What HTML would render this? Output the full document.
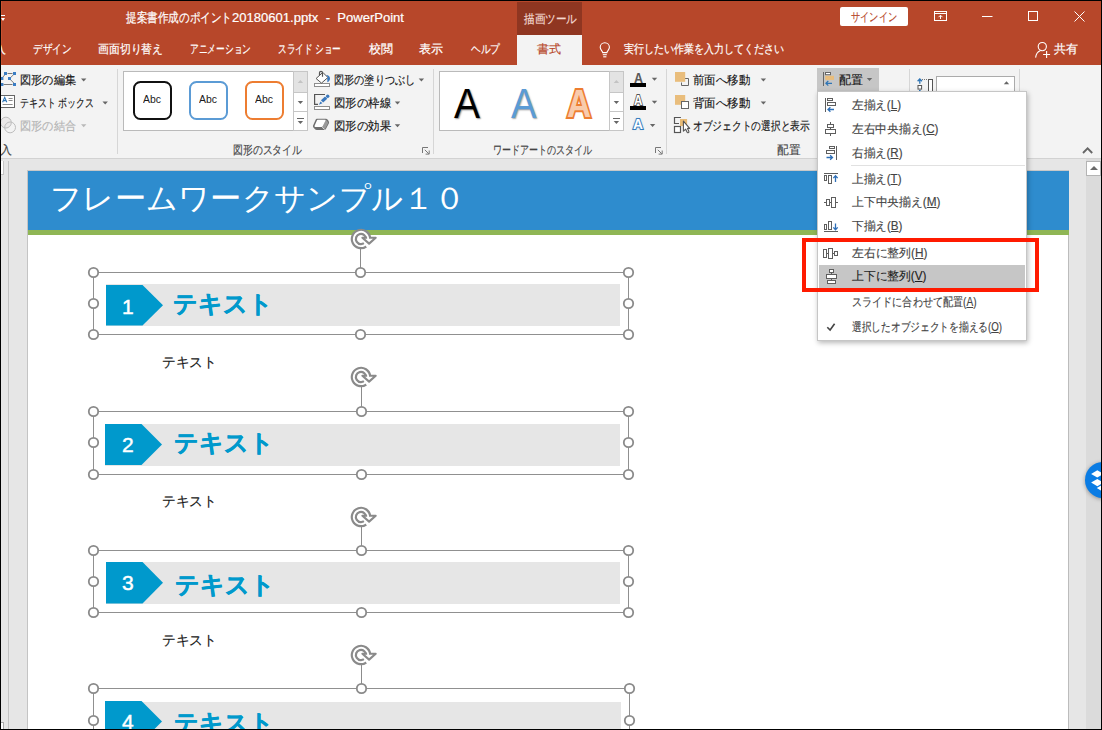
<!DOCTYPE html>
<html lang="ja"><head><meta charset="utf-8"><title>PowerPoint</title>
<style>
html,body{margin:0;padding:0;}
body{width:1102px;height:730px;overflow:hidden;background:#e6e6e6;font-family:"Liberation Sans",sans-serif;}
#app{position:relative;width:1102px;height:730px;overflow:hidden;background:#e6e6e6;}
#app div,#app span,#app svg{position:absolute;box-sizing:border-box;}
.t{white-space:nowrap;transform-origin:0 50%;display:block;}
.sep{width:1px;background:#d6d6d6;top:69px;height:85px;}
.sel{border:1px solid #909090;}
.stem{width:1px;background:#8c8c8c;}
.bar{background:#e6e6e6;}
u{text-decoration:underline;text-underline-offset:1px;}
.ui{-webkit-text-stroke-width:0.15px;}
.uw{-webkit-text-stroke-width:0.2px;}

</style></head>
<body>
<div id="app">
<!-- ===== title bar + tab row ===== -->
<div style="left:0;top:0;width:1102px;height:65px;background:#b7472a"></div>
<div style="left:1px;top:1px;width:1px;height:64px;background:#c8532f"></div>
<div style="left:517px;top:2px;width:65px;height:33px;background:#8f3621"></div>
<div style="left:517px;top:34.5px;width:65px;height:31px;background:#f3f3f3"></div>
<!-- QAT customize glyph -->
<div style="left:1px;top:15px;width:4px;height:1px;background:#fff"></div>
<div style="left:1px;top:18px;width:0;height:0;border-left:2px solid transparent;border-right:2.5px solid transparent;border-top:3px solid #fff"></div>
<!-- sign-in button -->
<div style="left:840px;top:7px;width:68px;height:19px;background:#fff;border-radius:2px"></div>
<!-- window controls -->
<svg style="left:930px;top:6px" width="160" height="22" viewBox="0 0 160 22" fill="none" stroke="#fff" stroke-width="1">
  <rect x="4.5" y="5.5" width="12" height="9"/><line x1="4.5" y1="7.5" x2="16.5" y2="7.5"/>
  <path d="M10.5 13V9.5M8.5 11.2l2-2 2 2"/>
  <line x1="52" y1="10.5" x2="62.5" y2="10.5"/>
  <rect x="98.5" y="5.5" width="9" height="9"/>
  <path d="M144.5 5.5l10 10M154.5 5.5l-10 10"/>
</svg>
<!-- lightbulb -->
<svg style="left:597px;top:41px" width="16" height="18" viewBox="0 0 16 18" fill="none" stroke="#fff" stroke-width="1.1">
  <path d="M5.7 11.6C5.5 9.9 3.2 8.8 3.2 6.3a4.6 4.6 0 0 1 9.2 0c0 2.5-2.3 3.6-2.5 5.3z"/>
  <line x1="5.8" y1="13.7" x2="9.8" y2="13.7"/><line x1="6.2" y1="15.8" x2="9.4" y2="15.8"/>
</svg>
<!-- share icon -->
<svg style="left:1033px;top:40px" width="20" height="20" viewBox="0 0 20 20" fill="none" stroke="#fff" stroke-width="1.1">
  <circle cx="9.3" cy="6.6" r="4.1"/><path d="M2.6 17.6c.4-3.6 2.4-6 4.6-6.9"/>
  <path d="M13.6 11v7M10.1 14.5h7"/>
</svg>

<!-- ===== ribbon ===== -->
<div style="left:0;top:65px;width:1102px;height:93px;background:#f3f3f3"></div>
<div style="left:0;top:158px;width:1102px;height:1px;background:#d2d2d2"></div>
<div class="sep" style="left:117px"></div>
<div class="sep" style="left:433px"></div>
<div class="sep" style="left:666px"></div>
<div class="sep" style="left:909px"></div>
<div class="sep" style="left:1019px"></div>
<!-- pressed "配置" button -->
<div style="left:817px;top:68px;width:62px;height:23.5px;background:#c6c6c6"></div>
<!-- shape style gallery -->
<div style="left:123px;top:71px;width:185px;height:60px;background:#fff;border:1px solid #bababa"></div>
<div style="left:293px;top:71px;width:15px;height:60px;border:1px solid #c6c6c6;background:#fff"></div>
<div style="left:294px;top:72px;width:13px;height:20px;background:#e3e3e3"></div>
<div style="left:294px;top:92px;width:13px;height:1px;background:#c6c6c6"></div>
<div style="left:294px;top:111px;width:13px;height:1px;background:#c6c6c6"></div>
<div style="left:132.5px;top:81px;width:39px;height:39px;border:2px solid #111;border-radius:7.5px"></div>
<div style="left:188.5px;top:81px;width:39px;height:39px;border:2px solid #5b9bd5;border-radius:7.5px"></div>
<div style="left:244.5px;top:81px;width:39px;height:39px;border:2px solid #ed7d31;border-radius:7.5px"></div>
<!-- wordart gallery -->
<div style="left:439px;top:71px;width:185px;height:60px;background:#fff;border:1px solid #bababa"></div>
<div style="left:609px;top:71px;width:15px;height:60px;border:1px solid #c6c6c6;background:#fff"></div>
<div style="left:610px;top:72px;width:13px;height:20px;background:#e3e3e3"></div>
<div style="left:610px;top:92px;width:13px;height:1px;background:#c6c6c6"></div>
<div style="left:610px;top:111px;width:13px;height:1px;background:#c6c6c6"></div>
<!-- size spinner -->
<div style="left:936px;top:76px;width:79px;height:20px;background:#fff;border:1px solid #ababab"></div>
<svg style="left:0;top:65px" width="1102" height="94" viewBox="0 65 1102 94" fill="none">
<!-- dropdown arrows -->
<g fill="#666">
<path d="M81 78.5h5.4l-2.7 3z"/><path d="M102.5 101.5h5.4l-2.7 3z"/>
<path d="M418.7 78.5h5.4l-2.7 3z"/><path d="M394.8 101.5h5.4l-2.7 3z"/><path d="M394.8 124.2h5.4l-2.7 3z"/>
<path d="M651.8 77.8h5.4l-2.7 3z"/><path d="M651.8 100.8h5.4l-2.7 3z"/><path d="M649.9 124h5.4l-2.7 3z"/>
<path d="M760.7 78.5h5.4l-2.7 3z"/><path d="M760.7 101.5h5.4l-2.7 3z"/>
<path d="M866.8 78h5.4l-2.7 3z"/>
<path d="M297.7 101h5.4l-2.7 3z"/><path d="M613.7 101h5.4l-2.7 3z"/>
<path d="M297.7 121h5.4l-2.7 3z"/><path d="M613.7 121h5.4l-2.7 3z"/>
<rect x="297" y="118" width="7" height="1"/><rect x="613" y="118" width="7" height="1"/>
<path d="M1003.8 84.3h5.4l-2.7-3z"/>
</g>
<path d="M81 124.2h5.4l-2.7 3z" fill="#b9b9b9"/>
<path d="M297.7 83h5.4l-2.7-3z" fill="#c3c3c3"/><path d="M613.7 83h5.4l-2.7-3z" fill="#c3c3c3"/>
<!-- dialog launchers -->
<g stroke="#777" stroke-width="1"><path d="M422.5 153V147.5H428"/><path d="M424.8 149.8l4 4M429.2 150.5v3.6h-3.6"/>
<path d="M655.5 153V147.5H661"/><path d="M657.8 149.8l4 4M662.2 150.5v3.6h-3.6"/></g>
<!-- collapse chevron -->
<path d="M1083 153l4.600-4.600 4.600 4.600" stroke="#666" stroke-width="1.900"/>
<!-- edit shape icon -->
<g stroke="#7a7a7a" stroke-width="1"><path d="M7.5 73.5h5M13.6 74.6l-3.4 3.4M10.4 79.6l3.4 3.4M3.5 84.5h9M4.8 74.8l-2.2 2.6" /></g>
<g fill="#3b7dc4"><rect x="4" y="72" width="3" height="3"/><rect x="13" y="72" width="3" height="3"/><rect x="8" y="77" width="3" height="3"/><rect x="1" y="77" width="2.4" height="3"/><rect x="1" y="83" width="2.4" height="3"/><rect x="13" y="83" width="3" height="3"/></g>
<!-- text box icon -->
<rect x="0.5" y="95.5" width="14" height="12" fill="#fff" stroke="#666"/>
<path d="M2.6 102.3l2.1-5 2.1 5M3.4 100.6h2.8" stroke="#2e75b6" stroke-width="1.1"/>
<path d="M8.6 98.5h4M8.6 100.5h4M2.6 104.5h10" stroke="#8a8a8a"/>
<!-- merge shapes (disabled) -->
<circle cx="5.9" cy="122.6" r="5.4" stroke="#bdbdbd" fill="#ebe9e9"/><circle cx="10.1" cy="127.4" r="5.4" stroke="#bdbdbd" fill="none"/>
<!-- shape fill -->
<rect x="314.500" y="83.500" width="15" height="3" fill="#fff" stroke="#8e8e8e"/>
<path d="M322.800 72.400l5.100 5.100-6.400 5.600-5.400-4.600z" fill="#fff" stroke="#555"/>
<path d="M319.500 75.300v-2.500c0-1 .5-1.500 1.500-1.500s1.500.5 1.500 1.500v3.900" stroke="#555" stroke-width="1.200"/>
<path d="M326.100 75c2.400.2 3.900 1.500 3.900 3.400 0 1.700-1 3-2.700 3.900.2-1.600.1-2.800-.2-3.900l1.100-1z" fill="#3a78bd"/>
<!-- shape outline -->
<rect x="314.500" y="106.500" width="15" height="3" fill="#fff" stroke="#8e8e8e"/>
<path d="M325 94.500h-10.400v9.900h3.400" stroke="#555" stroke-width="1.200"/>
<path d="M322 101.400l4.200-3.800" stroke="#3a78bd" stroke-width="3.300"/><circle cx="327.700" cy="96.300" r="1.700" fill="#3a78bd"/><path d="M318.900 104.700l1.600-3.300 1.900 1.900z" fill="#3a78bd"/>
<!-- shape effects -->
<path d="M317.400 118.700h7.900c1 0 2.100.400 2.700 1.300l.8 1.500c.4.700.4 1.400 0 2.100l-2.900 5.300c-.4.700-1 1.100-1.800 1.100h-7.300c-.8 0-1.500-.3-2-.9l-1.400-1.700c-.5-.6-.6-1.400-.2-2.100l2.300-5.400c.3-.8 1-1.200 1.900-1.200z" fill="#6f6f6f"/>
<path d="M326 119.800l2.300 3-3.400 6.400-2.700-2.300z" fill="#9a9a9a"/>
<path d="M317.700 119.700h7.100c.7 0 1 .5.700 1.100l-2.800 5.400c-.2.400-.6.700-1.100.7h-6.300c-.7 0-1-.5-.7-1.100l2.300-5.400c.2-.4.400-.700.800-.700z" fill="#fff"/>
<path d="M322.100 127.200l2.600 2.400" stroke="#f0f0f0" stroke-width=".8"/>
<!-- text fill / outline / effects -->
<rect x="630" y="83" width="16" height="4" fill="#000"/><rect x="630" y="106" width="16" height="4" fill="#000"/>
<!-- bring forward -->
<path d="M684 78.500h4.500v7h-7v-3" stroke="#666"/>
<rect x="675" y="72" width="10.200" height="9.800" fill="#e9bd7c"/>
<!-- send backward -->
<rect x="675" y="95" width="10.200" height="9.800" fill="#e9bd7c"/>
<rect x="681.500" y="101.500" width="7" height="7" fill="#fff" stroke="#666"/>
<!-- selection pane -->
<path d="M680.900 117.500h-6.400v6h4.500" stroke="#555" stroke-width="1.200"/><rect x="674.500" y="126.500" width="6" height="6" fill="#fff" stroke="#555" stroke-width="1.200"/>
<rect x="680" y="119" width="7.100" height="7" fill="#e8bb76"/>
<path d="M683.400 121.200v10l2.300-2 1.300 2.900c.3.600.9.800 1.400.5.500-.2.700-.800.400-1.400l-1.300-2.800h2.200z" fill="#fff" stroke="#555" stroke-width="1.100" stroke-linejoin="round"/>
<!-- align button icon -->
<path d="M823.500 72v14" stroke="#666"/><rect x="825.500" y="72.500" width="5" height="2.200" fill="#fff" stroke="#666"/>
<rect x="825.200" y="75.800" width="8.800" height="4.100" fill="#e9bd7c"/>
<path d="M832 83.300h-6M828.300 81l-2.400 2.300 2.400 2.300" stroke="#2e75b6" stroke-width="1.200"/>
<!-- size height icon -->
<path d="M919.800 83.800v-4.500M917.600 81.300l2.200-2.300 2.200 2.300" stroke="#2e75b6" stroke-width="1.300"/>
<rect x="918" y="85.500" width="3.600" height="3.600" fill="#fff" stroke="#555"/><rect x="919" y="90" width="1.600" height="1" fill="#2e75b6"/>
<path d="M922 79.500h5" stroke="#777" stroke-dasharray="1 1"/>
<rect x="928.500" y="79.500" width="4" height="13" fill="#fff" stroke="#555"/>
</svg>


<!-- ===== workspace ===== -->
<div style="left:0;top:159px;width:1102px;height:571px;background:#e6e6e6"></div>
<div style="left:8px;top:161px;width:1px;height:569px;background:#c2c2c2"></div>
<div style="left:1px;top:161px;width:3px;height:14px;background:#fff;border-right:1px solid #c6c6c6;border-bottom:1px solid #c6c6c6"></div>
<div style="left:1px;top:722px;width:3px;height:7px;background:#fff;border-right:1px solid #ababab;border-top:1px solid #ababab"></div>
<!-- scrollbar -->
<div style="left:1086px;top:159px;width:16px;height:571px;background:#dbdbdb"></div>
<div style="left:1086px;top:161px;width:15px;height:15px;background:#fff;border:1px solid #b4b4b4"></div>
<div style="left:1089.500px;top:165.800px;width:0;height:0;border-left:4px solid transparent;border-right:4px solid transparent;border-bottom:4.500px solid #6a6a6a"></div>
<!-- slide -->
<div style="left:27px;top:170px;width:1042px;height:560px;background:#fff;border-left:1px solid #c4c4c4;border-right:1px solid #bcbcbc;border-top:1px solid #c8c8c8"></div>
<div style="left:28px;top:171px;width:1041px;height:59.5px;background:#2e8cce"></div>
<div style="left:28px;top:230.3px;width:1041px;height:4.5px;background:#8fb655"></div>
<div class="bar" style="left:106px;top:284.2px;width:514px;height:41.8px"></div>
<svg style="left:105px;top:285.0px" width="60" height="41.5" viewBox="0 0 60 41.5"><path d="M1 0H37.5L58 20.25 37.5 40.5H1z" fill="#0099cc"/></svg>
<div class="sel" style="left:93px;top:272.0px;width:536px;height:63px"></div>
<div class="stem" style="left:360px;top:247.0px;height:25.5px"></div>
<svg style="left:349.1px;top:227.4px" width="30" height="24" viewBox="-12 -12 30 24" fill="none">
<path d="M7.08 -0.99A7.15 7.15 0 1 0 4.1 5.86" stroke="#8a8a8a" stroke-width="6.3"/>
<path d="M1.4 -1.3H14.7L8.1 4.6z" fill="#fff" stroke="#8a8a8a" stroke-width="2.1" stroke-linejoin="round"/>
<path d="M7.14 0.3A7.15 7.15 0 1 0 5.63 4.4" stroke="#fff" stroke-width="1.9"/>
</svg>
<svg style="left:87.0px;top:266.0px" width="13" height="13" viewBox="0 0 13 13"><circle cx="6.5" cy="6.5" r="4.7" fill="#fff" stroke="#8a8a8a" stroke-width="1.8"/></svg>
<svg style="left:87.0px;top:297.0px" width="13" height="13" viewBox="0 0 13 13"><circle cx="6.5" cy="6.5" r="4.7" fill="#fff" stroke="#8a8a8a" stroke-width="1.8"/></svg>
<svg style="left:87.0px;top:328.0px" width="13" height="13" viewBox="0 0 13 13"><circle cx="6.5" cy="6.5" r="4.7" fill="#fff" stroke="#8a8a8a" stroke-width="1.8"/></svg>
<svg style="left:354.0px;top:266.0px" width="13" height="13" viewBox="0 0 13 13"><circle cx="6.5" cy="6.5" r="4.7" fill="#fff" stroke="#8a8a8a" stroke-width="1.8"/></svg>
<svg style="left:354.0px;top:328.0px" width="13" height="13" viewBox="0 0 13 13"><circle cx="6.5" cy="6.5" r="4.7" fill="#fff" stroke="#8a8a8a" stroke-width="1.8"/></svg>
<svg style="left:622.0px;top:266.0px" width="13" height="13" viewBox="0 0 13 13"><circle cx="6.5" cy="6.5" r="4.7" fill="#fff" stroke="#8a8a8a" stroke-width="1.8"/></svg>
<svg style="left:622.0px;top:297.0px" width="13" height="13" viewBox="0 0 13 13"><circle cx="6.5" cy="6.5" r="4.7" fill="#fff" stroke="#8a8a8a" stroke-width="1.8"/></svg>
<svg style="left:622.0px;top:328.0px" width="13" height="13" viewBox="0 0 13 13"><circle cx="6.5" cy="6.5" r="4.7" fill="#fff" stroke="#8a8a8a" stroke-width="1.8"/></svg>
<div class="bar" style="left:105px;top:424.0px;width:515px;height:41.6px"></div>
<svg style="left:104px;top:424.0px" width="60" height="42.0" viewBox="0 0 60 42.0"><path d="M1 0H37.5L58 20.50 37.5 41.0H1z" fill="#0099cc"/></svg>
<div class="sel" style="left:93px;top:411.0px;width:536px;height:64px"></div>
<div class="stem" style="left:361px;top:386.0px;height:25.5px"></div>
<svg style="left:349.1px;top:365.4px" width="30" height="24" viewBox="-12 -12 30 24" fill="none">
<path d="M7.08 -0.99A7.15 7.15 0 1 0 4.1 5.86" stroke="#8a8a8a" stroke-width="6.3"/>
<path d="M1.4 -1.3H14.7L8.1 4.6z" fill="#fff" stroke="#8a8a8a" stroke-width="2.1" stroke-linejoin="round"/>
<path d="M7.14 0.3A7.15 7.15 0 1 0 5.63 4.4" stroke="#fff" stroke-width="1.9"/>
</svg>
<svg style="left:87.0px;top:405.0px" width="13" height="13" viewBox="0 0 13 13"><circle cx="6.5" cy="6.5" r="4.7" fill="#fff" stroke="#8a8a8a" stroke-width="1.8"/></svg>
<svg style="left:87.0px;top:436.0px" width="13" height="13" viewBox="0 0 13 13"><circle cx="6.5" cy="6.5" r="4.7" fill="#fff" stroke="#8a8a8a" stroke-width="1.8"/></svg>
<svg style="left:87.0px;top:468.0px" width="13" height="13" viewBox="0 0 13 13"><circle cx="6.5" cy="6.5" r="4.7" fill="#fff" stroke="#8a8a8a" stroke-width="1.8"/></svg>
<svg style="left:355.0px;top:405.0px" width="13" height="13" viewBox="0 0 13 13"><circle cx="6.5" cy="6.5" r="4.7" fill="#fff" stroke="#8a8a8a" stroke-width="1.8"/></svg>
<svg style="left:355.0px;top:468.0px" width="13" height="13" viewBox="0 0 13 13"><circle cx="6.5" cy="6.5" r="4.7" fill="#fff" stroke="#8a8a8a" stroke-width="1.8"/></svg>
<svg style="left:622.0px;top:405.0px" width="13" height="13" viewBox="0 0 13 13"><circle cx="6.5" cy="6.5" r="4.7" fill="#fff" stroke="#8a8a8a" stroke-width="1.8"/></svg>
<svg style="left:622.0px;top:436.0px" width="13" height="13" viewBox="0 0 13 13"><circle cx="6.5" cy="6.5" r="4.7" fill="#fff" stroke="#8a8a8a" stroke-width="1.8"/></svg>
<svg style="left:622.0px;top:468.0px" width="13" height="13" viewBox="0 0 13 13"><circle cx="6.5" cy="6.5" r="4.7" fill="#fff" stroke="#8a8a8a" stroke-width="1.8"/></svg>
<div class="bar" style="left:106px;top:562.0px;width:514px;height:41.8px"></div>
<svg style="left:105px;top:562.0px" width="60" height="42.5" viewBox="0 0 60 42.5"><path d="M1 0H37.5L58 20.75 37.5 41.5H1z" fill="#0099cc"/></svg>
<div class="sel" style="left:93px;top:550.0px;width:536px;height:63px"></div>
<div class="stem" style="left:361px;top:525.0px;height:25.5px"></div>
<svg style="left:349.1px;top:505.3px" width="30" height="24" viewBox="-12 -12 30 24" fill="none">
<path d="M7.08 -0.99A7.15 7.15 0 1 0 4.1 5.86" stroke="#8a8a8a" stroke-width="6.3"/>
<path d="M1.4 -1.3H14.7L8.1 4.6z" fill="#fff" stroke="#8a8a8a" stroke-width="2.1" stroke-linejoin="round"/>
<path d="M7.14 0.3A7.15 7.15 0 1 0 5.63 4.4" stroke="#fff" stroke-width="1.9"/>
</svg>
<svg style="left:87.0px;top:544.0px" width="13" height="13" viewBox="0 0 13 13"><circle cx="6.5" cy="6.5" r="4.7" fill="#fff" stroke="#8a8a8a" stroke-width="1.8"/></svg>
<svg style="left:87.0px;top:575.0px" width="13" height="13" viewBox="0 0 13 13"><circle cx="6.5" cy="6.5" r="4.7" fill="#fff" stroke="#8a8a8a" stroke-width="1.8"/></svg>
<svg style="left:87.0px;top:606.0px" width="13" height="13" viewBox="0 0 13 13"><circle cx="6.5" cy="6.5" r="4.7" fill="#fff" stroke="#8a8a8a" stroke-width="1.8"/></svg>
<svg style="left:355.0px;top:544.0px" width="13" height="13" viewBox="0 0 13 13"><circle cx="6.5" cy="6.5" r="4.7" fill="#fff" stroke="#8a8a8a" stroke-width="1.8"/></svg>
<svg style="left:355.0px;top:606.0px" width="13" height="13" viewBox="0 0 13 13"><circle cx="6.5" cy="6.5" r="4.7" fill="#fff" stroke="#8a8a8a" stroke-width="1.8"/></svg>
<svg style="left:622.0px;top:544.0px" width="13" height="13" viewBox="0 0 13 13"><circle cx="6.5" cy="6.5" r="4.7" fill="#fff" stroke="#8a8a8a" stroke-width="1.8"/></svg>
<svg style="left:622.0px;top:575.0px" width="13" height="13" viewBox="0 0 13 13"><circle cx="6.5" cy="6.5" r="4.7" fill="#fff" stroke="#8a8a8a" stroke-width="1.8"/></svg>
<svg style="left:622.0px;top:606.0px" width="13" height="13" viewBox="0 0 13 13"><circle cx="6.5" cy="6.5" r="4.7" fill="#fff" stroke="#8a8a8a" stroke-width="1.8"/></svg>
<div class="bar" style="left:105px;top:702.0px;width:516px;height:41.0px"></div>
<svg style="left:104px;top:701.0px" width="60" height="42.0" viewBox="0 0 60 42.0"><path d="M1 0H37.5L58 20.50 37.5 41.0H1z" fill="#0099cc"/></svg>
<div class="sel" style="left:93px;top:688.0px;width:537px;height:64px"></div>
<div class="stem" style="left:361px;top:663.0px;height:25.5px"></div>
<svg style="left:349.1px;top:643.3px" width="30" height="24" viewBox="-12 -12 30 24" fill="none">
<path d="M7.08 -0.99A7.15 7.15 0 1 0 4.1 5.86" stroke="#8a8a8a" stroke-width="6.3"/>
<path d="M1.4 -1.3H14.7L8.1 4.6z" fill="#fff" stroke="#8a8a8a" stroke-width="2.1" stroke-linejoin="round"/>
<path d="M7.14 0.3A7.15 7.15 0 1 0 5.63 4.4" stroke="#fff" stroke-width="1.9"/>
</svg>
<svg style="left:87.0px;top:682.0px" width="13" height="13" viewBox="0 0 13 13"><circle cx="6.5" cy="6.5" r="4.7" fill="#fff" stroke="#8a8a8a" stroke-width="1.8"/></svg>
<svg style="left:87.0px;top:713.5px" width="13" height="13" viewBox="0 0 13 13"><circle cx="6.5" cy="6.5" r="4.7" fill="#fff" stroke="#8a8a8a" stroke-width="1.8"/></svg>
<svg style="left:87.0px;top:745.0px" width="13" height="13" viewBox="0 0 13 13"><circle cx="6.5" cy="6.5" r="4.7" fill="#fff" stroke="#8a8a8a" stroke-width="1.8"/></svg>
<svg style="left:355.0px;top:682.0px" width="13" height="13" viewBox="0 0 13 13"><circle cx="6.5" cy="6.5" r="4.7" fill="#fff" stroke="#8a8a8a" stroke-width="1.8"/></svg>
<svg style="left:355.0px;top:745.0px" width="13" height="13" viewBox="0 0 13 13"><circle cx="6.5" cy="6.5" r="4.7" fill="#fff" stroke="#8a8a8a" stroke-width="1.8"/></svg>
<svg style="left:623.0px;top:682.0px" width="13" height="13" viewBox="0 0 13 13"><circle cx="6.5" cy="6.5" r="4.7" fill="#fff" stroke="#8a8a8a" stroke-width="1.8"/></svg>
<svg style="left:623.0px;top:713.5px" width="13" height="13" viewBox="0 0 13 13"><circle cx="6.5" cy="6.5" r="4.7" fill="#fff" stroke="#8a8a8a" stroke-width="1.8"/></svg>
<svg style="left:623.0px;top:745.0px" width="13" height="13" viewBox="0 0 13 13"><circle cx="6.5" cy="6.5" r="4.7" fill="#fff" stroke="#8a8a8a" stroke-width="1.8"/></svg>

<span class="t uw" id="t0" style="left:126px;top:11.0px;width:106.0px;font-size:13px;line-height:13px;color:#ffffff;transform:scaleX(0.8154);">提案書作成のポイント</span>
<span class="t uw" id="t1" style="left:232px;top:11.0px;width:172.0px;font-size:13px;line-height:13px;color:#ffffff;transform:scaleX(1.0042);">20180601.pptx&nbsp; - &nbsp;PowerPoint</span>
<span class="t uw" id="t2" style="left:524px;top:13.0px;width:53.0px;font-size:12px;line-height:12px;color:#f3d9d1;transform:scaleX(0.8833);">描画ツール</span>
<span class="t ui" id="t3" style="left:851px;top:10.5px;width:46.0px;font-size:12px;line-height:12px;color:#b7472a;transform:scaleX(0.7667);">サインイン</span>
<span class="t uw" id="t4" style="left:-6px;top:43.2px;width:12.0px;font-size:12px;line-height:12px;color:#ffffff;transform:scaleX(1.0000);">入</span>
<span class="t uw" id="t5" style="left:33px;top:43.2px;width:38.0px;font-size:12px;line-height:12px;color:#ffffff;transform:scaleX(0.7917);">デザイン</span>
<span class="t uw" id="t6" style="left:98px;top:43.2px;width:65.0px;font-size:12px;line-height:12px;color:#ffffff;transform:scaleX(0.9028);">画面切り替え</span>
<span class="t uw" id="t7" style="left:190px;top:43.2px;width:61.0px;font-size:12px;line-height:12px;color:#ffffff;transform:scaleX(0.7262);">アニメーション</span>
<span class="t uw" id="t8" style="left:278px;top:43.2px;width:63.0px;font-size:12px;line-height:12px;color:#ffffff;transform:scaleX(0.7213);">スライド ショー</span>
<span class="t uw" id="t9" style="left:369px;top:43.2px;width:24.0px;font-size:12px;line-height:12px;color:#ffffff;transform:scaleX(1.0000);">校閲</span>
<span class="t uw" id="t10" style="left:419px;top:43.2px;width:24.0px;font-size:12px;line-height:12px;color:#ffffff;transform:scaleX(1.0000);">表示</span>
<span class="t uw" id="t11" style="left:471px;top:43.2px;width:29.0px;font-size:12px;line-height:12px;color:#ffffff;transform:scaleX(0.8056);">ヘルプ</span>
<span class="t ui" id="t12" style="left:537px;top:43.2px;width:24.0px;font-size:12px;line-height:12px;color:#b7472a;transform:scaleX(1.0000);">書式</span>
<span class="t uw" id="t13" style="left:624px;top:43.2px;width:160.0px;font-size:12px;line-height:12px;color:#ffffff;transform:scaleX(0.8333);">実行したい作業を入力してください</span>
<span class="t uw" id="t14" style="left:1054px;top:43.2px;width:24.0px;font-size:12px;line-height:12px;color:#ffffff;transform:scaleX(1.0000);">共有</span>
<span class="t ui" id="t15" style="left:20px;top:74.1px;width:56.0px;font-size:12px;line-height:12px;color:#151515;transform:scaleX(0.9333);">図形の編集</span>
<span class="t ui" id="t16" style="left:19.5px;top:97.1px;width:73.5px;font-size:12px;line-height:12px;color:#151515;transform:scaleX(0.7399);">テキスト ボックス</span>
<span class="t ui" id="t17" style="left:20px;top:119.6px;width:56.0px;font-size:12px;line-height:12px;color:#b4b4b4;transform:scaleX(0.9333);">図形の結合</span>
<span class="t ui" id="t18" style="left:0px;top:144.0px;width:12.0px;font-size:12px;line-height:12px;color:#444444;transform:scaleX(1.0000);">入</span>
<span class="t" id="t19" style="left:143.3px;top:94.0px;width:18.0px;font-size:11px;line-height:11px;color:#1a1a1a;transform:scaleX(0.9489);">Abc</span>
<span class="t" id="t20" style="left:199.3px;top:94.0px;width:18.0px;font-size:11px;line-height:11px;color:#1a1a1a;transform:scaleX(0.9489);">Abc</span>
<span class="t" id="t21" style="left:255.3px;top:94.0px;width:18.0px;font-size:11px;line-height:11px;color:#1a1a1a;transform:scaleX(0.9489);">Abc</span>
<span class="t ui" id="t22" style="left:334px;top:74.1px;width:81.0px;font-size:12px;line-height:12px;color:#151515;transform:scaleX(0.8438);">図形の塗りつぶし</span>
<span class="t ui" id="t23" style="left:334px;top:97.1px;width:57.0px;font-size:12px;line-height:12px;color:#151515;transform:scaleX(0.9500);">図形の枠線</span>
<span class="t ui" id="t24" style="left:334px;top:119.6px;width:57.0px;font-size:12px;line-height:12px;color:#151515;transform:scaleX(0.9500);">図形の効果</span>
<span class="t ui" id="t25" style="left:232.6px;top:144.0px;width:69.1px;font-size:12px;line-height:12px;color:#444444;transform:scaleX(0.8226);">図形のスタイル</span>
<span class="t" id="t26" style="left:453.5px;top:82.5px;width:26.0px;font-size:42px;line-height:42px;color:#000;transform:scaleX(0.9281);text-shadow:1px 1px 1.5px rgba(0,0,0,.45);">A</span>
<span class="t" id="t27" style="left:510.5px;top:82.5px;width:25.5px;font-size:42px;line-height:42px;color:#5b9bd5;transform:scaleX(0.9102);text-shadow:1px 1px 1.5px rgba(0,0,0,.35);">A</span>
<span class="t ui" id="t28" style="left:492.5px;top:144.0px;width:99.5px;font-size:12px;line-height:12px;color:#444444;transform:scaleX(0.7538);">ワードアートのスタイル</span>
<span class="t ui" id="t29" style="left:693.3px;top:74.1px;width:57.2px;font-size:12px;line-height:12px;color:#151515;transform:scaleX(0.9533);">前面へ移動</span>
<span class="t ui" id="t30" style="left:693.3px;top:97.1px;width:57.2px;font-size:12px;line-height:12px;color:#151515;transform:scaleX(0.9533);">背面へ移動</span>
<span class="t ui" id="t31" style="left:693.3px;top:119.6px;width:116.7px;font-size:12px;line-height:12px;color:#151515;transform:scaleX(0.8104);">オブジェクトの選択と表示</span>
<span class="t ui" id="t32" style="left:776.6px;top:144.0px;width:23.4px;font-size:12px;line-height:12px;color:#444444;transform:scaleX(0.9750);">配置</span>
<span class="t ui" id="t33" style="left:839px;top:74.1px;width:24.0px;font-size:12px;line-height:12px;color:#151515;transform:scaleX(1.0000);">配置</span>
<span class="t" id="t34" style="left:50.3px;top:183.1px;width:415.7px;font-size:31px;line-height:31px;color:#ffffff;transform:scaleX(1.0090);">フレームワークサンプル１０</span>
<span class="t" id="t35" style="left:122.45000000000002px;top:295.5px;width:11.7px;font-size:21px;line-height:21px;color:#ffffff;transform:scaleX(1.0011);-webkit-text-stroke:0.45px #fff;">1</span>
<span class="t" id="t36" style="left:172.9px;top:292.2px;width:100.2px;font-size:24px;line-height:24px;color:#0099cc;transform:scaleX(1.0020);font-weight:bold;-webkit-text-stroke:0.5px #0099cc;">テキスト</span>
<span class="t" id="t37" style="left:122.45000000000002px;top:433.5px;width:11.7px;font-size:21px;line-height:21px;color:#ffffff;transform:scaleX(1.0011);-webkit-text-stroke:0.45px #fff;">2</span>
<span class="t" id="t38" style="left:174.4px;top:430.7px;width:100.2px;font-size:24px;line-height:24px;color:#0099cc;transform:scaleX(1.0020);font-weight:bold;-webkit-text-stroke:0.5px #0099cc;">テキスト</span>
<span class="t" id="t39" style="left:122.15px;top:572.1px;width:11.7px;font-size:21px;line-height:21px;color:#ffffff;transform:scaleX(1.0011);-webkit-text-stroke:0.45px #fff;">3</span>
<span class="t" id="t40" style="left:174.9px;top:573.2px;width:100.2px;font-size:24px;line-height:24px;color:#0099cc;transform:scaleX(1.0020);font-weight:bold;-webkit-text-stroke:0.5px #0099cc;">テキスト</span>
<span class="t" id="t41" style="left:122.45000000000002px;top:710.9px;width:11.7px;font-size:21px;line-height:21px;color:#ffffff;transform:scaleX(1.0011);-webkit-text-stroke:0.45px #fff;">4</span>
<span class="t" id="t42" style="left:173.9px;top:710.7px;width:100.2px;font-size:24px;line-height:24px;color:#0099cc;transform:scaleX(1.0020);font-weight:bold;-webkit-text-stroke:0.5px #0099cc;">テキスト</span>
<span class="t ui" id="t43" style="left:161.5px;top:355.6px;width:54.5px;font-size:13.5px;line-height:13.5px;color:#1a1a1a;transform:scaleX(0.9732);">テキスト</span>
<span class="t ui" id="t44" style="left:161.5px;top:494.6px;width:54.5px;font-size:13.5px;line-height:13.5px;color:#1a1a1a;transform:scaleX(0.9732);">テキスト</span>
<span class="t ui" id="t45" style="left:161.5px;top:633.5px;width:54.5px;font-size:13.5px;line-height:13.5px;color:#1a1a1a;transform:scaleX(0.9732);">テキスト</span>
<span class="t ui" id="t46" style="left:851.5px;top:98.6px;width:49.0px;font-size:12px;line-height:12px;color:#444444;transform:scaleX(0.9667);z-index:30;">左揃え(<u>L</u>)</span>
<span class="t ui" id="t47" style="left:851.5px;top:122.6px;width:86.5px;font-size:12px;line-height:12px;color:#444444;transform:scaleX(0.9755);z-index:30;">左右中央揃え(<u>C</u>)</span>
<span class="t ui" id="t48" style="left:851.5px;top:146.6px;width:50.5px;font-size:12px;line-height:12px;color:#444444;transform:scaleX(0.9588);z-index:30;">右揃え(<u>R</u>)</span>
<span class="t ui" id="t49" style="left:851.5px;top:172.6px;width:49.5px;font-size:12px;line-height:12px;color:#444444;transform:scaleX(0.9641);z-index:30;">上揃え(<u>T</u>)</span>
<span class="t ui" id="t50" style="left:851.5px;top:196.1px;width:88.5px;font-size:12px;line-height:12px;color:#444444;transform:scaleX(0.9833);z-index:30;">上下中央揃え(<u>M</u>)</span>
<span class="t ui" id="t51" style="left:851.5px;top:220.1px;width:50.5px;font-size:12px;line-height:12px;color:#444444;transform:scaleX(0.9709);z-index:30;">下揃え(<u>B</u>)</span>
<span class="t ui" id="t52" style="left:851.5px;top:246.6px;width:75.5px;font-size:12px;line-height:12px;color:#444444;transform:scaleX(0.9847);z-index:30;">左右に整列(<u>H</u>)</span>
<span class="t ui" id="t53" style="left:851.5px;top:270.1px;width:74.5px;font-size:12px;line-height:12px;color:#1e1e1e;transform:scaleX(0.9801);z-index:30;">上下に整列(<u>V</u>)</span>
<span class="t ui" id="t54" style="left:851.5px;top:296.1px;width:124.5px;font-size:12px;line-height:12px;color:#444444;transform:scaleX(0.8411);z-index:30;">スライドに合わせて配置(<u>A</u>)</span>
<span class="t ui" id="t55" style="left:851.5px;top:320.6px;width:150.0px;font-size:12px;line-height:12px;color:#444444;transform:scaleX(0.8093);z-index:30;">選択したオブジェクトを揃える(<u>O</u>)</span>
<span class="t" id="t56" style="left:567.2px;top:84.4px;width:24.1px;font-size:39px;line-height:39px;color:#f8cbad;transform:scaleX(0.8555);-webkit-text-stroke:3.8px #ed7d31;paint-order:stroke fill;font-weight:bold;">A</span>
<span class="t" id="t57" style="left:634px;top:71.0px;width:9.0px;font-size:14px;line-height:14px;color:#5a5a5a;transform:scaleX(0.8889);font-weight:bold;">A</span>
<span class="t" id="t58" style="left:634.3px;top:92.6px;width:8.4px;font-size:14px;line-height:14px;color:#fff;transform:scaleX(0.8296);-webkit-text-stroke:1.9px #555;paint-order:stroke fill;font-weight:bold;">A</span>
<span class="t" id="t59" style="left:633.1px;top:116.9px;width:10.0px;font-size:14px;line-height:14px;color:#fff;transform:scaleX(0.9877);-webkit-text-stroke:2px #2e75b6;paint-order:stroke fill;font-weight:bold;text-shadow:0 0 2.5px #5b9bd5;">A</span>

<!-- ===== dropdown menu ===== -->
<div style="left:817px;top:91px;width:210px;height:249.5px;background:#fff;border:1px solid #c6c6c6;box-shadow:1px 2px 5px rgba(0,0,0,.28);z-index:20"></div>
<div style="left:819px;top:265px;width:206px;height:22.5px;background:#c6c6c6;z-index:21"></div>
<div style="left:851px;top:165px;width:174px;height:1px;background:#e1e1e1;z-index:21"></div>
<svg style="left:817px;top:91px;z-index:31" width="40" height="250" viewBox="817 91 40 250" fill="#fff" stroke="#5e5e5e" stroke-width="1">
<!-- align left -->
<path d="M825.500 98v14"/><rect x="827.500" y="98.500" width="5" height="2"/><rect x="827.500" y="102.500" width="8" height="3"/>
<path d="M834 109.500h-6M830.400 107.300l-2.400 2.200 2.400 2.200" stroke="#2e6fb7" stroke-width="1.300" fill="none"/>
<!-- center -->
<path d="M830.500 122v14"/><rect x="827.500" y="124.500" width="6" height="3"/><rect x="825.500" y="129.500" width="10" height="4"/>
<!-- align right -->
<path d="M836.500 146v14"/><rect x="829.500" y="146.500" width="5" height="2"/><rect x="826.500" y="150.500" width="8" height="3"/>
<path d="M826.500 157.500h6M830.100 155.300l2.400 2.200-2.400 2.200" stroke="#2e6fb7" stroke-width="1.300" fill="none"/>
<!-- align top -->
<path d="M824 173.500h14"/><rect x="824.500" y="175.500" width="2" height="5"/><rect x="828.500" y="175.500" width="3" height="8"/>
<path d="M835.500 182v-6M833.300 178.100l2.200-2.400 2.200 2.400" stroke="#2e6fb7" stroke-width="1.300" fill="none"/>
<!-- align middle -->
<path d="M824 202.500h14"/><rect x="826.500" y="199.500" width="3" height="6"/><rect x="831.500" y="197.500" width="4" height="10"/>
<!-- align bottom -->
<path d="M824 231.500h14"/><rect x="824.500" y="224.500" width="2" height="5"/><rect x="828.500" y="221.500" width="3" height="8"/>
<path d="M835.500 223.500v6M833.300 227.400l2.200 2.400 2.200-2.400" stroke="#2e6fb7" stroke-width="1.300" fill="none"/>
<!-- distribute horizontally -->
<path d="M826 253.500h9"/><rect x="823.500" y="249.500" width="3" height="8"/><rect x="828.500" y="248.500" width="4" height="10"/><rect x="834.500" y="251.500" width="3" height="4"/>
<!-- distribute vertically -->
<path d="M831.500 272v9"/><rect x="829.500" y="269.500" width="4" height="3"/><rect x="826.500" y="274.500" width="10" height="4"/><rect x="827.500" y="280.500" width="8" height="3"/>
<!-- check -->
<path d="M827.300 327.200l2.800 2.800 4.500-6.300" stroke="#444" stroke-width="1.600" fill="none"/>
</svg>

<!-- red annotation -->
<div style="left:802px;top:238px;width:237px;height:53.5px;border:4px solid #ff1a00;z-index:40"></div>
<!-- dropbox badge -->
<div style="left:1085px;top:462px;width:36px;height:36px;border-radius:50%;background:#0a7ce4;box-shadow:0 1px 4px rgba(0,0,0,.35);z-index:45"></div>
<svg style="left:1085px;top:462px;z-index:46" width="17" height="36" viewBox="0 0 17 36" fill="#fff">
  <path d="M12.3 8.2l6.2 3.7-6.2 3.7-6.2-3.7z"/><path d="M12.3 16.9l6.2 3.7-6.2 3.7-6.2-3.7z"/><path d="M18 22.4l6.2 3.7-6.2 3.7-6.2-3.7z"/>
</svg>
<!-- outer black frame -->
<div style="left:0;top:0;width:1102px;height:1px;background:#000;z-index:50"></div>
<div style="left:0;top:729px;width:1102px;height:1px;background:#000;z-index:50"></div>
<div style="left:0;top:0;width:1px;height:730px;background:#000;z-index:50"></div>
<div style="left:1101px;top:0;width:1px;height:730px;background:#000;z-index:50"></div>
</div>

<script>
(function(){try{var es=document.querySelectorAll('.t');for(var i=0;i<es.length;i++){var e=es[i],w=parseFloat(e.style.width);if(!w)continue;var old=e.style.transform;e.style.transform='none';var r=document.createRange();r.selectNodeContents(e);var n=r.getBoundingClientRect().width;e.style.transform=(n>0)?'scaleX('+(w/n).toFixed(4)+')':old;}}catch(x){}})();
</script>
</body></html>
